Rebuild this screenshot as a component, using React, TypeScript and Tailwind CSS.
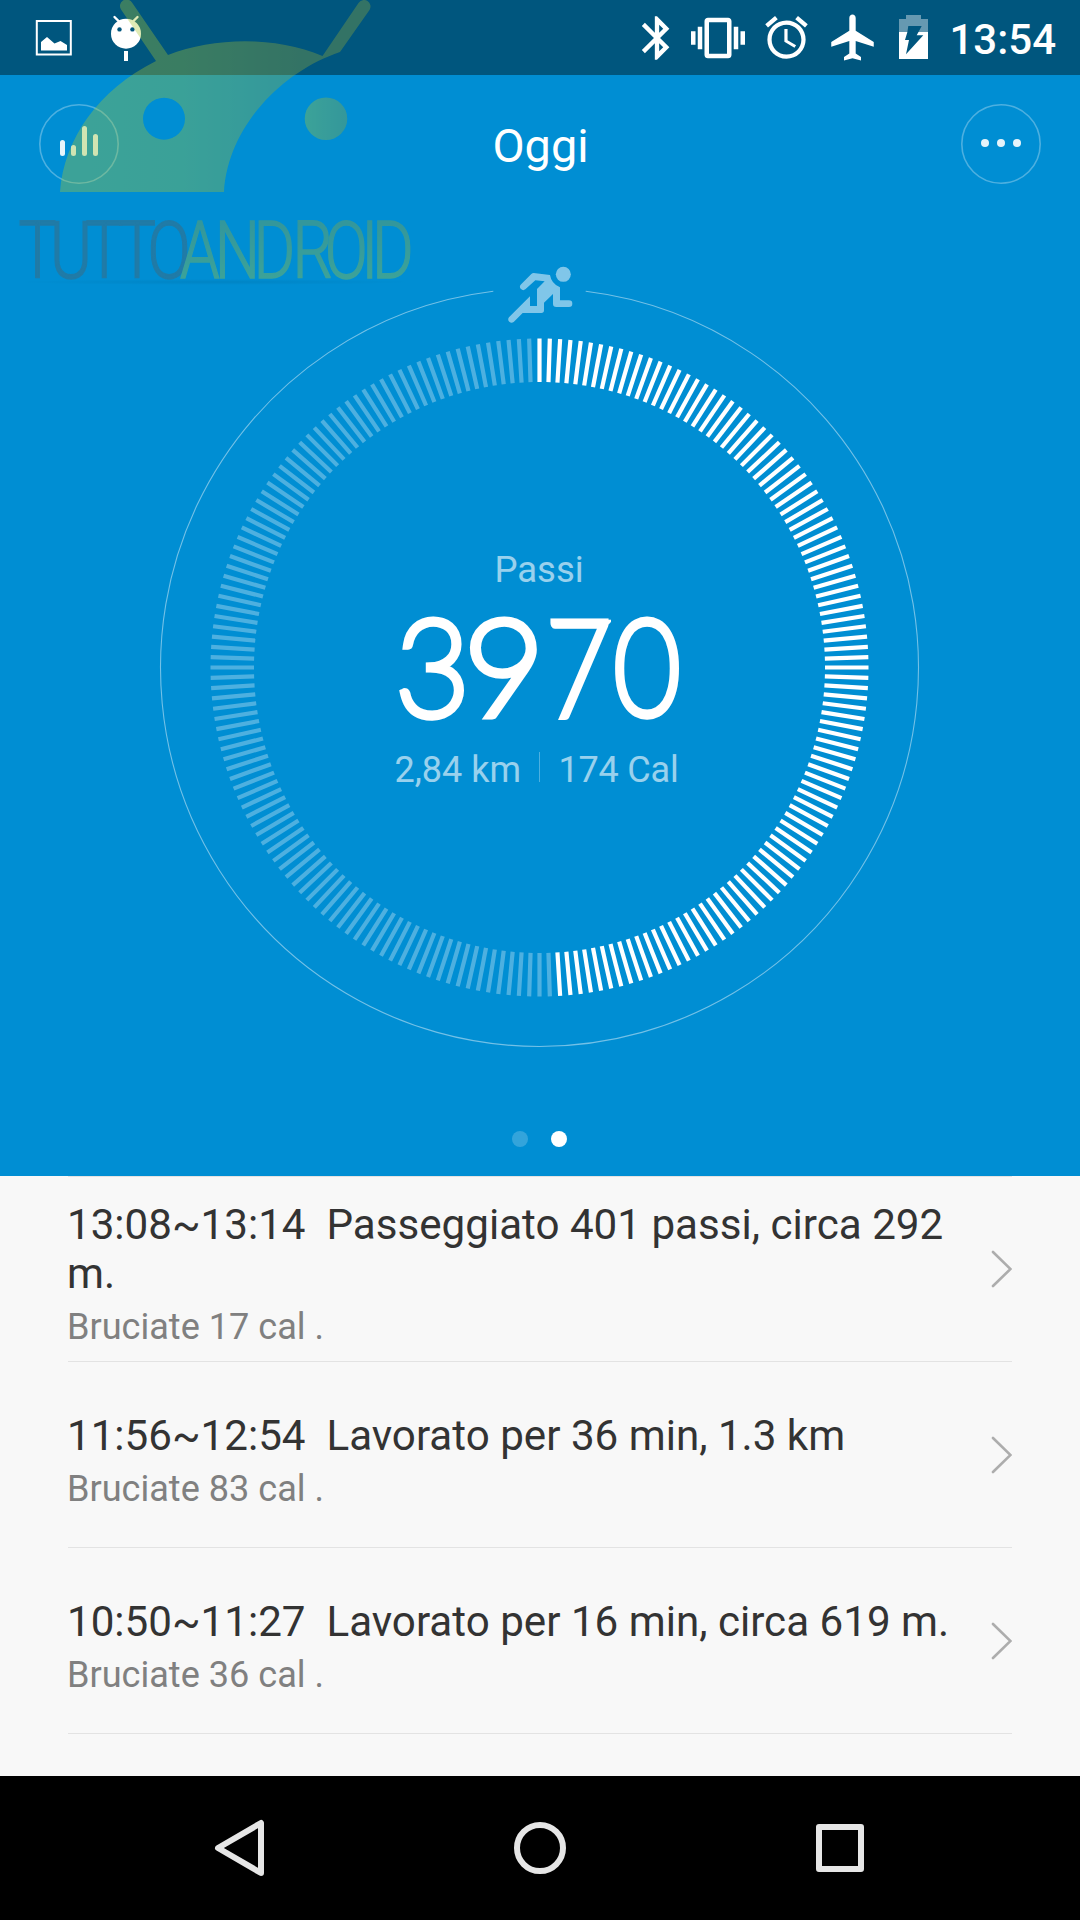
import { MdAlarm, MdBluetooth, MdVibration } from "react-icons/md";

const TICKS = 200;
const FILLED = 99;

const activities = [
  { time: "13:08~13:14", title: "Passeggiato 401 passi, circa 292 m.", note: "Bruciate 17 cal ." },
  { time: "11:56~12:54", title: "Lavorato per 36 min, 1.3 km", note: "Bruciate 83 cal ." },
  { time: "10:50~11:27", title: "Lavorato per 16 min, circa 619 m.", note: "Bruciate 36 cal ." },
];

function StatusBar() {
  return (
    <div className="flex h-[75px] items-center justify-between bg-[#00567e] text-white">
      <svg className="h-[75px] w-[160px]" viewBox="0 0 160 75">
        <rect x="36.800" y="21" width="34" height="33.500" fill="none" stroke="#fff" strokeWidth="2" />
        <path d="M41 50.500V42l6-5 7.500 6.500 6-2.500 6.500 4v5.500z" fill="#fff" />
        <circle cx="126" cy="33.700" r="15" fill="#fff" />
        <path d="M114.500 17l6 6M137.500 17l-6 6" stroke="#fff" strokeWidth="2.400" strokeLinecap="round" />
        <circle cx="119.500" cy="29.400" r="2.200" fill="#00567e" />
        <circle cx="132.400" cy="29.400" r="2.200" fill="#00567e" />
        <path d="M126 51v10" stroke="#fff" strokeWidth="4" />
      </svg>
      <div className="flex h-[75px] items-center pr-6">
        <MdBluetooth className="size-[52px]" />
        <MdVibration className="ml-2 size-[54px]" />
        <MdAlarm className="ml-4 size-[51px]" />
        <svg className="ml-[15px] h-[55px] w-[51px]" viewBox="0 0 24 24" preserveAspectRatio="none" fill="currentColor">
          <path d="M22 16v-2l-8.500-5V3.500c0-.83-.67-1.500-1.500-1.500s-1.500.67-1.500 1.500V9L2 14v2l8.500-2.500V19L8 20.500V22l4-1 4 1v-1.500L13.500 19v-5.500L22 16z" />
        </svg>
        <svg className="ml-[21px] h-[75px] w-[29px]" viewBox="899 0 29 75" fill="currentColor" fillRule="evenodd">
          <path opacity=".4" d="M906 15h15v4h7v13h-9.500l3.200-6h-13.400l-.9 6H899V19h7z" />
          <path d="M899 32h8.400L905 40h4l-3 14.300L923.300 35.300h-6.600l1.800-3.300h9.500v27h-29z" />
        </svg>
        <span className="mt-1 ml-[21px] text-[42px] leading-none font-medium">13:54</span>
      </div>
    </div>
  );
}

function Header() {
  return (
    <div className="flex h-[180px] items-start justify-between px-[39px] pt-[29px]">
      <button className="size-20">
        <svg viewBox="39 104 80 80" fill="none" stroke="#fff">
          <circle cx="79" cy="144" r="39.200" strokeWidth="1.600" opacity=".3" />
          <path d="M62.500 142.500v11M73.500 147.500v6M84.500 128.500v25M95.500 136.500v17" strokeWidth="5" strokeLinecap="round" opacity=".9" />
        </svg>
      </button>
      <h1 className="pt-[14px] pl-px text-[46.800px] leading-[56px] text-white">Oggi</h1>
      <button className="size-20">
        <svg viewBox="961 104 80 80">
          <circle cx="1001" cy="144" r="39.200" fill="none" stroke="#fff" strokeWidth="1.600" opacity=".3" />
          <g fill="#fff" opacity=".9">
            <circle cx="985" cy="143" r="4" />
            <circle cx="1001" cy="143" r="4" />
            <circle cx="1017" cy="143" r="4" />
          </g>
        </svg>
      </button>
    </div>
  );
}

function Dial() {
  return (
    <div className="grid h-[800px] justify-center">
      <svg className="col-start-1 row-start-1 h-[800px] w-[780px]" viewBox="150 255 780 800">
        <path d="M493.300 291.300A379 379 0 1 0 585.700 291.300" fill="none" stroke="#fff" strokeWidth="1.100" opacity=".45" />
        {Array.from({ length: TICKS }, (_, i) => (
          <path
            key={i}
            d="M539.500 338.500v43.500"
            stroke="#fff"
            strokeWidth="4.200"
            opacity={i < FILLED ? 1 : 0.3}
            transform={`rotate(${(i * 360) / TICKS} 539.500 667.500)`}
          />
        ))}
        {/* runner */}
        <g fill="#fff" opacity=".5" transform="translate(440 240) scale(.33333)">
          <circle cx="370" cy="103" r="22.500" />
          <path d="M281 99L330 105Q334 131 360 142V181H387A10 10 0 0 1 387 201H349Q339 201 339 191V162L312 188V211Q312 219 304 219H248L221 246A10 10 0 0 1 207 232L270 169V198H291V147L314 124L286 121L256 148A10 10 0 0 1 242 134L274 102Q277 99 281 99Z" />
        </g>
      </svg>
      <div className="col-start-1 row-start-1 flex flex-col items-center pt-[294px] text-white">
        <div className="pr-0.5 text-[36.500px] leading-[42px] opacity-60">Passi</div>
        <div className="mt-0.5 flex pr-[7px] font-['Lato'] text-[131.500px] leading-[143px] font-thin [-webkit-text-stroke:9px_#fff]">
          <span className="flex w-[71px] scale-x-96 justify-center">3</span>
          <span className="flex w-[72px] scale-x-105 justify-center">9</span>
          <span className="flex w-[77px] scale-x-84 justify-center">7</span>
          <span className="flex w-[60px] scale-x-86 justify-center">0</span>
        </div>
        <div className="mt-[13px] flex pr-0.5 text-[36px] leading-[42px]">
          <span className="w-36 opacity-60">2,84 km</span>
          <span className="mt-[3px] h-[30px] w-px bg-white/30" />
          <span className="w-36 pl-[19px] tracking-[-0.2px] whitespace-nowrap opacity-60">174 Cal</span>
        </div>
      </div>
    </div>
  );
}

function NavBar() {
  return (
    <div className="flex h-36 items-center justify-center gap-[240px] bg-black">
      <svg className="size-[60px]" viewBox="0 0 60 60" fill="none" stroke="#e6e6e6" strokeWidth="6" strokeLinejoin="round">
        <path d="M8 30L51 5V55Z" />
      </svg>
      <svg className="size-[60px]" viewBox="0 0 60 60" fill="none" stroke="#e6e6e6" strokeWidth="6">
        <circle cx="30" cy="30" r="23" />
      </svg>
      <svg className="size-[60px]" viewBox="0 0 60 60" fill="none" stroke="#e6e6e6" strokeWidth="6" strokeLinejoin="round">
        <rect x="9" y="9" width="42" height="42" />
      </svg>
    </div>
  );
}

function Watermark() {
  return (
    <svg className="pointer-events-none absolute top-0 left-0 h-[300px] w-[430px]" viewBox="0 0 430 300">
      <defs>
        <linearGradient id="green" gradientUnits="userSpaceOnUse" x1="60" y1="0" x2="300" y2="0">
          <stop offset="0" stopColor="#a8c832" />
          <stop offset=".5" stopColor="#a4c432" />
          <stop offset="1" stopColor="#90a838" />
        </linearGradient>
        <linearGradient id="eye" x1="0" y1="0" x2="1" y2="0">
          <stop offset="0" stopColor="#a8c832" />
          <stop offset="1" stopColor="#90a838" />
        </linearGradient>
        <linearGradient id="letters" x1="0" y1="0" x2="0" y2="1">
          <stop offset=".2" stopColor="#90a838" />
          <stop offset=".8" stopColor="#a8c832" />
        </linearGradient>
        <radialGradient id="shadow">
          <stop offset="0" stopColor="#000" stopOpacity=".07" />
          <stop offset="1" stopColor="#000" stopOpacity="0" />
        </radialGradient>
      </defs>
      <ellipse cx="215" cy="282" rx="200" ry="3" fill="url(#shadow)" />
      <g opacity=".36">
        <path
          fill="url(#green)"
          fillRule="evenodd"
          d="M60 192C64 139 98 90 156 61L121 9.500A6.500 6.500 0 0 1 132 2.500L168 55C214 37 276 36 322.500 56L358.500 3A6.500 6.500 0 0 1 369.500 10L340 52C281 72 228 127 224 192ZM185 118.700A21 21 0 1 0 143 118.700A21 21 0 1 0 185 118.700Z"
        />
        <circle cx="326" cy="118.700" r="21.300" fill="url(#eye)" />
        {/* squeezed light lettering, one x per glyph */}
        <g transform="scale(.8 1)" fontSize="79.500" fontWeight="300" textAnchor="middle" strokeWidth="1.500">
          <text x="46.800 88.600 130.200 171.100 211.400" y="278.500" fill="#5a5a5a" stroke="#5a5a5a">
            TUTTO
          </text>
          <text x="250 296.800 343 390.800 433 462.300 491" y="278.500" fill="url(#letters)" stroke="url(#letters)">
            ANDROID
          </text>
        </g>
      </g>
    </svg>
  );
}

function App() {
  return (
    <div className="relative h-[1920px] w-[1080px] overflow-hidden bg-[#f8f8f8] font-['Roboto',sans-serif]">
      <StatusBar />
      <div className="h-[1101px] bg-[#008ed3]">
        <Header />
        <Dial />
        <div className="flex justify-center gap-[23.500px] pt-[76px] pr-px">
          <span className="size-4 rounded-full bg-white/20" />
          <span className="size-4 rounded-full bg-white" />
        </div>
      </div>
      <div className="mx-[68px] h-[600px] border-t border-[#e3e3e3]">
        {activities.map((a) => (
          <div key={a.time} className="group flex h-[186px] items-center justify-between border-b border-[#e3e3e3] first:h-[185px]">
            <div className="-ml-px w-[897px] pt-3 group-first:pt-[10px]">
              <div className="text-[42.150px] leading-[49px] whitespace-pre-wrap text-[#333]">{a.time + "  " + a.title}</div>
              <div className="mt-2 text-[36.100px] leading-[42px] text-[#808080]">{a.note}</div>
            </div>
            <svg className="h-10 w-[21px]" viewBox="0 0 21 40" fill="none" stroke="#adadad" strokeWidth="2.600" strokeLinecap="round">
              <path d="M2 3L19.500 20L2 37" />
            </svg>
          </div>
        ))}
      </div>
      <NavBar />
      <Watermark />
    </div>
  );
}

export default App;
